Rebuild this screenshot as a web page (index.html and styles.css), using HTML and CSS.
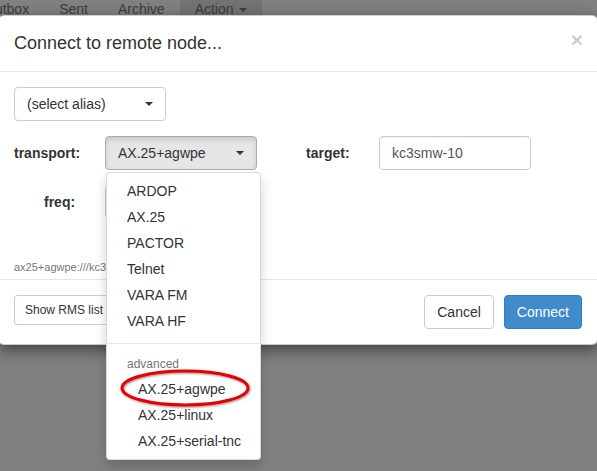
FILE: index.html
```html
<!DOCTYPE html>
<html>
<head>
<meta charset="utf-8">
<link rel="stylesheet" href="styles.css">
</head>
<body>
<div class="navbar">
  <ul class="nav">
    <li class="nav-item">Outbox</li>
    <li class="nav-item">Sent</li>
    <li class="nav-item">Archive</li>
    <li class="nav-item active">Action <span class="caret dim"></span></li>
  </ul>
</div>

<div class="modal">
  <div class="modal-header">
    <h4 class="modal-title">Connect to remote node...</h4>
    <span class="close">×</span>
  </div>
  <div class="modal-body">
    <button class="btn btn-default btn-alias"><span>(select alias)</span><span class="caret"></span></button>

    <div class="form-row">
      <label class="lbl lbl-transport">transport:</label>
      <div class="btn-group">
        <button class="btn btn-default btn-select open"><span>AX.25+agwpe</span><span class="caret"></span></button>
        <ul class="dropdown-menu">
          <li class="item">ARDOP</li>
          <li class="item">AX.25</li>
          <li class="item">PACTOR</li>
          <li class="item">Telnet</li>
          <li class="item">VARA FM</li>
          <li class="item">VARA HF</li>
          <li class="divider"></li>
          <li class="header">advanced</li>
          <li class="item sub">AX.25+agwpe</li>
          <li class="item sub">AX.25+linux</li>
          <li class="item sub">AX.25+serial-tnc</li>
        </ul>
      </div>
      <label class="lbl lbl-target">target:</label>
      <input class="form-control" type="text" value="kc3smw-10">
    </div>

    <div class="form-row row-freq">
      <label class="lbl lbl-freq">freq:</label>
      <input class="form-control" type="text" value="">
    </div>

    <div class="url">ax25+agwpe:///kc3smw-10</div>
  </div>
  <div class="modal-footer">
    <button class="btn btn-default btn-sm">Show RMS list</button>
    <div class="footer-right">
      <button class="btn btn-default">Cancel</button>
      <button class="btn btn-primary">Connect</button>
    </div>
  </div>
</div>

<svg class="highlight" width="140" height="46" viewBox="0 0 140 46">
  <defs>
    <filter id="sh" x="-20%" y="-40%" width="140%" height="180%">
      <feDropShadow dx="1" dy="1" stdDeviation="1.2" flood-color="#000" flood-opacity="0.45"/>
    </filter>
  </defs>
  <ellipse cx="68" cy="22" rx="63" ry="17" fill="none" stroke="#e60000" stroke-width="3" filter="url(#sh)"/>
</svg>
</body>
</html>
```
FILE: styles.css
```css
html, body {
  margin: 0;
  padding: 0;
}
body {
  background: #808080;
  font-family: "Liberation Sans", Arial, sans-serif;
  font-size: 14px;
  line-height: 20px;
  color: #333;
  width: 597px;
  height: 471px;
  overflow: hidden;
  position: relative;
}
.navbar {
  margin-top: -16px;
  margin-left: -31px;
}
.nav {
  list-style: none;
  margin: 0;
  padding: 0;
  display: flex;
}
.nav-item {
  padding: 15px;
  line-height: 20px;
  color: #3c3c3c;
  font-size: 14px;
}
.nav-item.active {
  background: #737373;
}
.caret {
  display: inline-block;
  width: 0;
  height: 0;
  border-top: 4px solid #333;
  border-left: 4px solid transparent;
  border-right: 4px solid transparent;
  vertical-align: middle;
}
.caret.dim {
  border-top-color: #3c3c3c;
  margin-left: 2px;
}

.modal {
  position: absolute;
  top: 15px;
  left: -2px;
  width: 600px;
  box-sizing: border-box;
  background: #fff;
  border: 1px solid rgba(0,0,0,.2);
  border-radius: 6px;
  box-shadow: 0 5px 15px rgba(0,0,0,.5);
}
.modal-header {
  padding: 14px 15px 15px;
  border-bottom: 1px solid #e5e5e5;
  display: flex;
  justify-content: space-between;
  align-items: center;
}
.modal-title {
  margin: 0;
  font-size: 18px;
  font-weight: normal;
  line-height: 26px;
  color: #333;
}
.close {
  font-size: 21px;
  font-weight: bold;
  color: #000;
  opacity: .2;
  line-height: 1;
  margin-right: -1px;
  margin-top: -8px;
}
.modal-body {
  padding: 15px 15px 4px;
}
.btn {
  font-family: "Liberation Sans", Arial, sans-serif;
  font-size: 14px;
  line-height: 20px;
  padding: 6px 12px;
  border: 1px solid #ccc;
  border-radius: 4px;
  background: #fff;
  color: #333;
  box-sizing: border-box;
  margin: 0;
}
.btn-alias, .btn-select {
  width: 152px;
  height: 34px;
  display: flex;
  justify-content: space-between;
  align-items: center;
  padding: 6px 12px;
}
.btn-select.open {
  background: #e6e6e6;
  border-color: #adadad;
  box-shadow: inset 0 3px 5px rgba(0,0,0,.125);
}
.form-row {
  display: flex;
  align-items: center;
  margin-top: 15px;
}
.lbl {
  font-weight: bold;
  color: #333;
}
.lbl-transport {
  width: 91px;
}
.lbl-target {
  margin-left: 49px;
  width: 73px;
}
.lbl-freq {
  width: 61px;
  padding-left: 30px;
}
.btn-group {
  position: relative;
}
.form-control {
  width: 152px;
  height: 34px;
  box-sizing: border-box;
  padding: 6px 12px;
  font-family: "Liberation Sans", Arial, sans-serif;
  font-size: 14px;
  color: #555;
  border: 1px solid #ccc;
  border-radius: 4px;
  box-shadow: inset 0 1px 1px rgba(0,0,0,.075);
  margin: 0;
}
.url {
  margin-top: 40px;
  font-size: 11px;
  line-height: 16px;
  color: #777;
}
.dropdown-menu {
  position: absolute;
  top: 100%;
  left: 1px;
  margin: 2px 0 0;
  padding: 5px 0;
  list-style: none;
  width: 155px;
  box-sizing: border-box;
  background: #fff;
  border: 1px solid rgba(0,0,0,.15);
  border-radius: 4px;
  box-shadow: 0 6px 12px rgba(0,0,0,.175);
  z-index: 10;
}
.dropdown-menu .item {
  padding: 3px 20px;
  line-height: 20px;
  color: #333;
  white-space: nowrap;
}
.dropdown-menu .item.sub {
  padding-left: 31px;
}
.dropdown-menu .divider {
  height: 1px;
  margin: 9px 0;
  background: #e5e5e5;
}
.dropdown-menu .header {
  padding: 3px 20px;
  font-size: 12px;
  line-height: 17px;
  color: #777;
}
.modal-footer {
  padding: 15px;
  border-top: 1px solid #e5e5e5;
  display: flex;
  justify-content: space-between;
  align-items: flex-start;
}
.btn-sm {
  font-size: 12px;
  line-height: 18px;
  padding: 5px 10px;
  border-radius: 3px;
  height: 30px;
}
.footer-right {
  display: flex;
  gap: 10px;
}
.btn-primary {
  background: #428bca;
  border-color: #357ebd;
  color: #fff;
}
.highlight {
  position: absolute;
  left: 117px;
  top: 366px;
  z-index: 20;
}
```
